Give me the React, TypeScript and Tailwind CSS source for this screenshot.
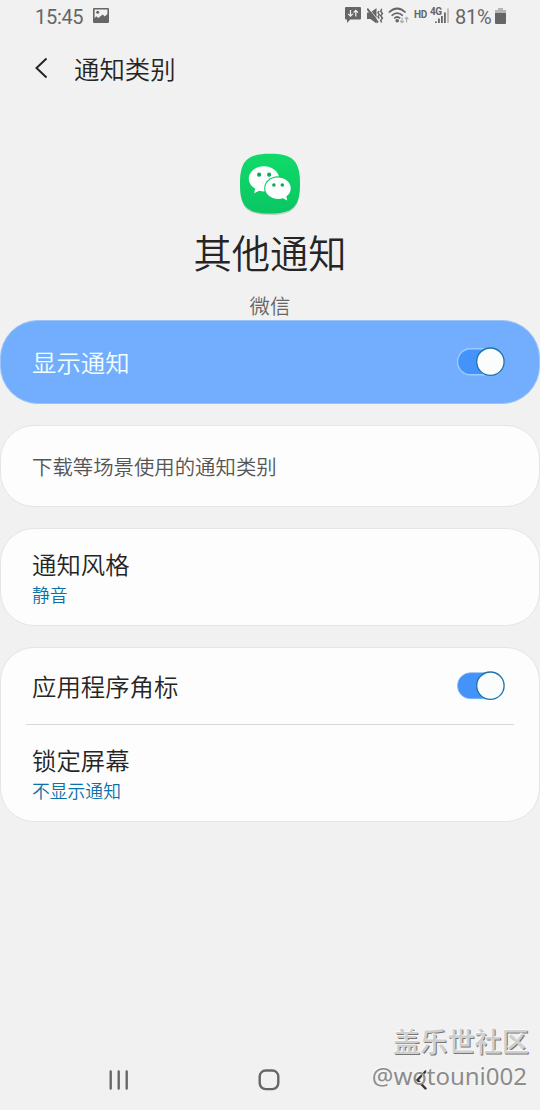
import React, { useState } from 'react';

interface ToggleProps {
  on: boolean;
  onChange: (on: boolean) => void;
  outlined?: boolean;
}

const Toggle: React.FC<ToggleProps> = ({ on, onChange, outlined }) => (
  <button
    type="button"
    role="switch"
    aria-checked={on}
    onClick={() => onChange(!on)}
    className="w-12 h-[30px] flex-shrink-0 block"
  >
    <svg viewBox="0 0 48 30" className="w-full h-full">
      <rect
        x="0.5"
        y="1.7"
        width="46"
        height="26"
        rx="13"
        fill={on ? '#4493fb' : '#b5b5b5'}
        stroke={outlined ? '#9accff' : '#7cb8f5'}
        strokeWidth={outlined ? 1.4 : 0.7}
      />
      <circle cx={on ? 33.4 : 14.4} cy="14.7" r="13.7" fill="#fbfdfd" stroke="#1d74ad" strokeWidth="1.3" />
    </svg>
  </button>
);

const StatusBar: React.FC = () => (
  <div className="h-[34px] flex items-center justify-between pl-[35px] pr-[34px] text-[#666] font-['Roboto',sans-serif] font-normal text-[20px] leading-none flex-shrink-0">
    <div className="flex items-center gap-[9px]">
      <span className="w-[49px] mt-[-1px] tracking-[-0.3px]">15:45</span>
      <svg viewBox="0 0 16 15" className="w-4 h-[15px] mt-[-3px]">
        <path fill="#666" fillRule="evenodd" d="M1.2 0h13.6Q16 0 16 1.2v12.6Q16 15 14.8 15H1.2Q0 15 0 13.8V1.2Q0 0 1.2 0zM1.6 1.5v8.7l1.7-1.9 2 1.8 4.4-3.5 2.2 1.8 2.5-2.3V1.5z" />
        <circle cx="4.7" cy="4.3" r="1.5" fill="#666" />
      </svg>
    </div>

    <div className="flex items-center">
      {/* Message with data arrows */}
      <svg viewBox="0 0 16 17" className="w-4 h-[17px] mr-1.5 mt-[-3px]">
        <path fill="#666" d="M1 0h14q1 0 1 1v10.500q0 1-1 1H5.200L2 16v-3.500H1q-1 0-1-1V1Q0 0 1 0z" />
        <path fill="none" stroke="#f2f2f2" strokeWidth="1.2" d="M5.5 3v6M3.2 6.800l2.300 2.300 2.300-2.300M10.800 9.500v-6M8.600 5.700l2.200-2.300L13 5.700" />
      </svg>
      {/* Muted, vibrating */}
      <svg viewBox="0 0 17 18" className="w-[17px] h-[18px] mr-[4px] mt-[-3px]">
        <path fill="#666" d="M0 5.500h3.500L9.500 1v15.500L3.500 12H0z" />
        <path fill="none" stroke="#f2f2f2" strokeWidth="0.800" d="M1.500 1l10 12.500" />
        <path fill="none" stroke="#666" strokeWidth="2" d="M0.200 1.500l10.800 14" />
        <path fill="none" stroke="#666" strokeWidth="1.500" d="M12 4l-1 1.800 1.300 1.900-1.300 2 1.300 2M14.800 1.800l-1.100 2.400 1.700 2.300-1.700 2.300 1.700 2.300-1.700 2.400 1 2" />
      </svg>
      {/* Wifi */}
      <svg viewBox="0 0 22 18" className="w-[22px] h-[18px] mr-[4px] mt-[-2px]">
        <g fill="none" stroke="#666" strokeWidth="1.7">
          <path d="M0.800 5.500Q9.200 -2.500 17.600 5.500" />
          <path d="M3.600 8.600Q9.200 3.500 14.800 8.600" />
          <path d="M6.200 11.400Q9.200 8.600 12.200 11.400" />
        </g>
        <circle cx="9.200" cy="13.700" r="1.800" fill="#666" />
        <path fill="none" stroke="#aaa" strokeWidth="1.1" d="M14 10.500v5.200M12 13.800l2 2 2-2M18.600 15.500v-5.200M16.800 12.200l1.800-2 1.800 2" />
      </svg>
      <span className="w-[14px] mr-[3px] mt-[-4px] text-[10px] font-bold tracking-[-0.2px]">HD</span>
      {/* Mobile signal, network label on top */}
      <div className="relative w-[18px] h-[18px] mr-[6px] mt-[-3px]">
        <svg viewBox="0 0 18 18" className="w-[18px] h-[18px]">
          <path fill="#666" d="M4 14.500h1.800V16H4zM7 11.500h1.800V16H7zM10 9h1.800v7H10zM13 5.500h1.800V16H13z" />
          <path fill="#aaa" d="M16.300 1.500h1.400V16h-1.400z" />
        </svg>
        <span className="absolute left-[-1px] top-0 text-[10px] font-bold leading-[9px] tracking-[-0.4px]">4G</span>
      </div>
      <span className="w-[36px] mr-[4px] mt-[-1px] tracking-[-0.3px]">81%</span>
      <svg viewBox="0 0 11 16" className="w-[11px] h-4 mt-[-3px]">
        <path fill="#b5b5b5" d="M3 0h5v2h3v4H0V2h3z" />
        <path fill="#666" d="M0 5h11v10q0 1-1 1H1q-1 0-1-1z" />
      </svg>
    </div>
  </div>
);

const WeChatIcon: React.FC = () => (
  <svg viewBox="0 0 62 62" className="w-[62px] h-[62px]">
    <defs>
      <linearGradient id="wechat" x1="0" y1="0" x2="0" y2="1">
        <stop offset="0" stopColor="#10da69" />
        <stop offset="1" stopColor="#0ac663" />
      </linearGradient>
    </defs>
    <path fill="#c4cdc7" d="M31 2C54 2 61 9 61 32S54 62 31 62 1 55 1 32 8 2 31 2z" />
    <path fill="url(#wechat)" d="M31 0.8C54 0.8 61 8 61 30.8S54 60.6 31 60.6 1 54 1 30.8 8 0.8 31 0.8z" />
    <path fill="#fff" d="M25 13.2c8.500 0 15.200 5.700 15.200 12.600S33.500 38.400 25 38.400c-1.700 0-3.300-.2-4.800-.6L15 40.300l1.300-4.500c-3.900-2.300-6.500-5.900-6.500-10 0-6.900 6.700-12.600 15.200-12.600z" />
    <ellipse cx="39" cy="35.4" rx="13.8" ry="12.100" fill="#0bcb63" />
    <path fill="#fff" d="M39 24.500c7.100 0 12.800 4.800 12.800 10.800 0 3.300-1.700 6.300-4.500 8.200l1 3.900-4.400-2.200c-1.500.5-3.200.8-4.900.8-7.100 0-12.800-4.800-12.800-10.700S31.900 24.500 39 24.500z" />
    <g fill="#0dab58">
      <circle cx="20.100" cy="21.700" r="2.100" />
      <circle cx="30.100" cy="21.700" r="2.100" />
      <circle cx="34.900" cy="32" r="1.800" />
      <circle cx="43.300" cy="32" r="1.800" />
    </g>
  </svg>
);

const NavBar: React.FC = () => (
  <div className="relative h-[61px] w-full">
    <div className="h-full grid grid-cols-[237px_64px_239px] items-center">
      <svg viewBox="0 0 20 20" className="w-5 h-5 justify-self-center">
        <path fill="none" stroke="#686868" strokeWidth="2.400" strokeLinecap="round" d="M1.700 1.500v17M9.700 1.500v17M17.700 1.500v17" />
      </svg>
      <svg viewBox="0 0 22 22" className="w-[22px] h-[22px] justify-self-center">
        <rect x="1.700" y="1.500" width="18.600" height="18.600" rx="6" fill="none" stroke="#666" strokeWidth="2.400" />
      </svg>
      <svg viewBox="0 0 12 20" className="w-3 h-5 justify-self-center">
        <path fill="none" stroke="#333" strokeWidth="2.400" strokeLinecap="round" d="M10.500 1.500L2.500 10l8 8.500" />
      </svg>
    </div>
    {/* Community watermark over the bar */}
    <div className="absolute right-[11px] bottom-[17px] flex flex-col items-end whitespace-nowrap font-normal pointer-events-none">
      <span className="text-[27.200px] leading-[35px] font-medium text-[#cfcfcf] [text-shadow:-1px_-1px_0_#f9f8f5,1px_1px_0_#777]">盖乐世社区</span>
      <span className="text-[24px] leading-[35px] mr-[2px] text-[#8c8c8c] font-['Noto_Sans',sans-serif] [text-shadow:-1px_-1px_0_#faf9f6]">@wotouni002</span>
    </div>
  </div>
);

export default function App() {
  const [showNotifications, setShowNotifications] = useState(true);
  const [appBadge, setAppBadge] = useState(true);

  return (
    <div className="w-[540px] h-[1110px] bg-[#f1f1f1] overflow-hidden flex flex-col font-['Noto_Sans_CJK_SC',sans-serif] font-[350] text-[#252525]">
      <StatusBar />

      <header className="h-[68px] flex items-center pl-[34px] flex-shrink-0">
        <svg viewBox="0 0 14 22" className="w-[14px] h-[22px] mr-[26px]">
          <path fill="none" stroke="#252525" strokeWidth="2" d="M12.500 1.500L2.500 11l10 9.500" />
        </svg>
        <h1 className="text-[25.400px] leading-9">通知类别</h1>
      </header>

      <div className="flex flex-col items-center pt-[51px] h-[218px] flex-shrink-0">
        <WeChatIcon />
        <h2 className="text-[38.300px] leading-[52px] mt-[11px]">其他通知</h2>
        <p className="text-[20.400px] leading-7 mt-[13px] text-[#666]">微信</p>
      </div>

      <main className="flex flex-col gap-[21px]">
        <section className="h-[84px] rounded-[38px] bg-[#73aefe] border border-[#9bc4f5] flex items-center justify-between pl-[31px] pr-[34px]">
          <span className="text-[24.400px] leading-9 text-[#f2ffff]">显示通知</span>
          <Toggle on={showNotifications} onChange={setShowNotifications} outlined />
        </section>

        <section className="h-[82px] rounded-[34px] bg-[#fdfdfd] border border-[#e5e5e5] flex items-center pl-[31px]">
          <p className="text-[20.400px] leading-7 text-[#555]">下载等场景使用的通知类别</p>
        </section>

        <section className="h-[98px] rounded-[34px] bg-[#fdfdfd] border border-[#e5e5e5] pl-[31px] pt-[17px]">
          <h3 className="text-[24.400px] leading-9">通知风格</h3>
          <p className="text-[17.800px] leading-[25px] text-[#0a72ab]">静音</p>
        </section>

        <section className="h-[175px] rounded-[34px] bg-[#fdfdfd] border border-[#e5e5e5]">
          <div className="h-[76px] flex items-center justify-between pl-[31px] pr-[34px]">
            <h3 className="text-[24.400px] leading-9">应用程序角标</h3>
            <Toggle on={appBadge} onChange={setAppBadge} />
          </div>
          <div className="h-px bg-[#d8d8d8] mx-[25px]" />
          <div className="pl-[31px] pt-[17px]">
            <h3 className="text-[24.400px] leading-9">锁定屏幕</h3>
            <p className="text-[17.800px] leading-[25px] text-[#0a72ab]">不显示通知</p>
          </div>
        </section>
      </main>

      <div className="mt-auto">
        <NavBar />
      </div>
    </div>
  );
}
